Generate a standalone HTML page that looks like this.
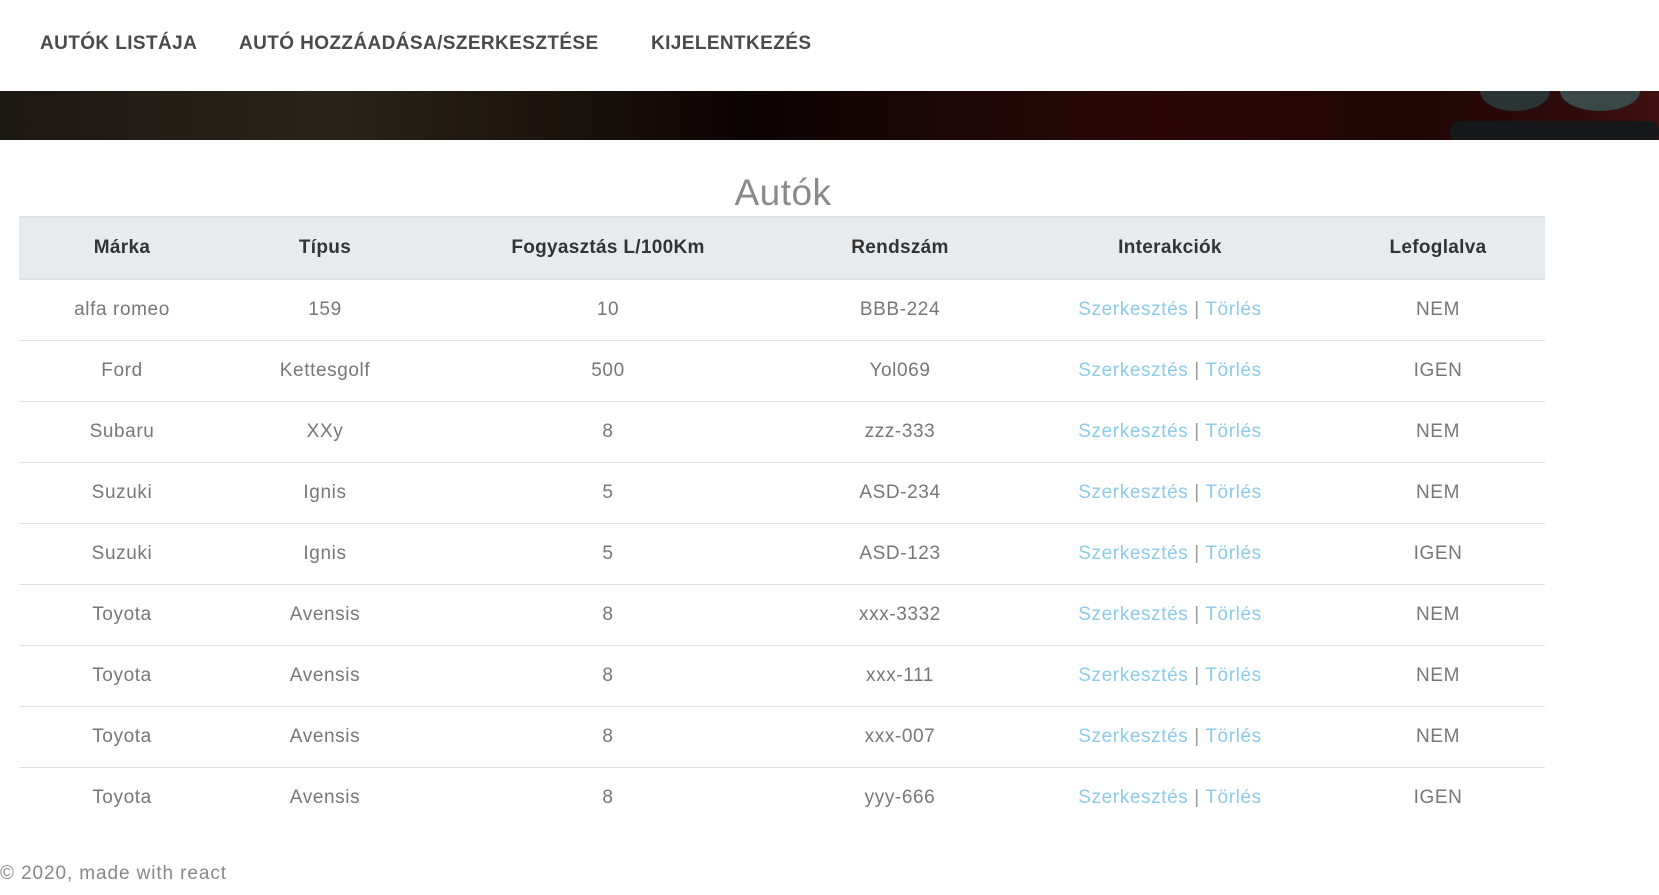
<!DOCTYPE html>
<html><head><meta charset="utf-8"><style>
body{margin:0;width:1659px;height:895px;overflow:hidden;background:#fff;font-family:"Liberation Sans",sans-serif;}
.nav{height:91px;position:relative}
.nav a{position:absolute;top:33px;font-weight:bold;font-size:19px;color:#4a4a4a;letter-spacing:0.4px;text-decoration:none}
.banner{height:49px;background:linear-gradient(90deg,#1c1812 0%,#2a241a 20%,#18100a 36%,#0c0303 45%,#1e0606 58%,#2a0808 70%,#200505 85%,#2e0c0c 95%,#401010 100%);position:relative;overflow:hidden}
h1{margin:0;position:absolute;top:172px;left:0;width:1566px;text-align:center;font-weight:normal;font-size:37px;color:#8a8a8a;letter-spacing:0.5px}
table{position:absolute;top:216px;left:19px;width:1526px;border-collapse:collapse;table-layout:fixed}
th{background:#e8ebee;height:60px;font-size:19px;color:#333;font-weight:bold;border-top:2px solid #dee2e6;border-bottom:2px solid #dee2e6;padding:0;letter-spacing:0.3px}
td{height:60px;text-align:center;font-size:19px;color:#777;border-bottom:1px solid #dee2e6;padding:0;letter-spacing:0.6px}
tr:last-child td{border-bottom:none}
.l{color:#8ccbea}.p{color:#999}
.f{position:absolute;top:863px;left:0;font-size:19px;color:#888;letter-spacing:0.9px}
</style></head><body>
<div class="nav"><a style="left:40px">AUTÓK LISTÁJA</a><a style="left:239px">AUTÓ HOZZÁADÁSA/SZERKESZTÉSE</a><a style="left:651px">KIJELENTKEZÉS</a></div>
<div class="banner">
<div style="position:absolute;left:1480px;top:-20px;width:70px;height:40px;border-radius:50%;background:#2a3434"></div>
<div style="position:absolute;left:1560px;top:-20px;width:80px;height:40px;border-radius:50%;background:#3a4848"></div>
<div style="position:absolute;left:1450px;top:30px;width:209px;height:22px;border-radius:10px;background:#15171b"></div>
</div>
<h1>Autók</h1>
<table>
<colgroup><col style="width:206px"><col style="width:200px"><col style="width:366px"><col style="width:218px"><col style="width:322px"><col style="width:214px"></colgroup>
<tr><th>Márka</th><th>Típus</th><th>Fogyasztás L/100Km</th><th>Rendszám</th><th>Interakciók</th><th>Lefoglalva</th></tr>
<tr><td>alfa romeo</td><td>159</td><td>10</td><td>BBB-224</td><td><span class="l">Szerkesztés</span> <span class="p">|</span> <span class="l">Törlés</span></td><td>NEM</td></tr>
<tr><td>Ford</td><td>Kettesgolf</td><td>500</td><td>Yol069</td><td><span class="l">Szerkesztés</span> <span class="p">|</span> <span class="l">Törlés</span></td><td>IGEN</td></tr>
<tr><td>Subaru</td><td>XXy</td><td>8</td><td>zzz-333</td><td><span class="l">Szerkesztés</span> <span class="p">|</span> <span class="l">Törlés</span></td><td>NEM</td></tr>
<tr><td>Suzuki</td><td>Ignis</td><td>5</td><td>ASD-234</td><td><span class="l">Szerkesztés</span> <span class="p">|</span> <span class="l">Törlés</span></td><td>NEM</td></tr>
<tr><td>Suzuki</td><td>Ignis</td><td>5</td><td>ASD-123</td><td><span class="l">Szerkesztés</span> <span class="p">|</span> <span class="l">Törlés</span></td><td>IGEN</td></tr>
<tr><td>Toyota</td><td>Avensis</td><td>8</td><td>xxx-3332</td><td><span class="l">Szerkesztés</span> <span class="p">|</span> <span class="l">Törlés</span></td><td>NEM</td></tr>
<tr><td>Toyota</td><td>Avensis</td><td>8</td><td>xxx-111</td><td><span class="l">Szerkesztés</span> <span class="p">|</span> <span class="l">Törlés</span></td><td>NEM</td></tr>
<tr><td>Toyota</td><td>Avensis</td><td>8</td><td>xxx-007</td><td><span class="l">Szerkesztés</span> <span class="p">|</span> <span class="l">Törlés</span></td><td>NEM</td></tr>
<tr><td>Toyota</td><td>Avensis</td><td>8</td><td>yyy-666</td><td><span class="l">Szerkesztés</span> <span class="p">|</span> <span class="l">Törlés</span></td><td>IGEN</td></tr>
</table>
<div class="f">© 2020, made with react</div>
</body></html>
